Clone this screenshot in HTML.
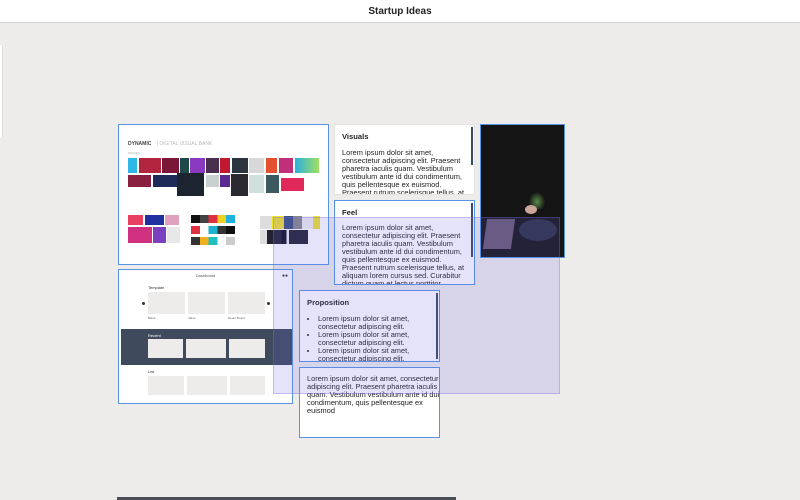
<!DOCTYPE html>
<html><head><style>
*{margin:0;padding:0;box-sizing:border-box}
body{width:800px;height:500px;overflow:hidden;background:#eeecea;font-family:"Liberation Sans",sans-serif;position:relative}
.a{position:absolute}
.hdr{left:0;top:0;width:800px;height:23px;background:#fff;border-bottom:1px solid #d6d4d2;text-align:center;font-size:10px;font-weight:bold;line-height:24px;color:#222}
.card{position:absolute;background:#fff;border:1px solid #5595e4;overflow:hidden}
.txt{font-size:7.4px;line-height:8px;color:#222}
.ttl{font-size:7.6px;font-weight:bold;color:#222}
.sb{position:absolute;right:1px;top:2px;width:2px;background:#3a4a6a}
.r{position:absolute}
</style></head><body>
<div class="a hdr">Startup Ideas</div>
<div class="a" style="left:0;top:45px;width:3px;height:93px;background:#fff;border-right:1px solid #ddd"></div>

<div class="card" style="left:118px;top:124px;width:211px;height:141px">
<div class="r" style="left:9px;top:16px;font-size:5px;font-weight:bold;color:#444">DYNAMIC <span style="color:#bbb;font-weight:normal;margin-left:4px">| DIGITAL VISUAL BANK</span></div>
<div class="r" style="left:9px;top:26px;font-size:3px;color:#aaa">IMAGES</div>
</div>
<div class="r" style="left:128px;top:158px;width:9px;height:15px;background:#2fb7e8"></div>
<div class="r" style="left:139px;top:158px;width:22px;height:15px;background:#b3243e"></div>
<div class="r" style="left:162px;top:158px;width:17px;height:15px;background:#7a1638"></div>
<div class="r" style="left:180px;top:158px;width:9px;height:15px;background:#1d4a48"></div>
<div class="r" style="left:190px;top:158px;width:15px;height:15px;background:#8a3ac0"></div>
<div class="r" style="left:206px;top:158px;width:13px;height:15px;background:#4a3050"></div>
<div class="r" style="left:220px;top:158px;width:10px;height:15px;background:#c0182e"></div>
<div class="r" style="left:232px;top:158px;width:16px;height:15px;background:#2c3440"></div>
<div class="r" style="left:249px;top:158px;width:15px;height:15px;background:#d8d8d8"></div>
<div class="r" style="left:266px;top:158px;width:11px;height:15px;background:#e5502e"></div>
<div class="r" style="left:279px;top:158px;width:14px;height:15px;background:#c0307a"></div>
<div class="r" style="left:295px;top:158px;width:24px;height:15px;background:linear-gradient(90deg,#2bb0e0,#a0e060)"></div>
<div class="r" style="left:128px;top:175px;width:23px;height:12px;background:#8a2040"></div>
<div class="r" style="left:153px;top:175px;width:24px;height:12px;background:#1e2a58"></div>
<div class="r" style="left:177px;top:173px;width:27px;height:23px;background:#1c2430"></div>
<div class="r" style="left:206px;top:175px;width:13px;height:12px;background:#c8d0d0"></div>
<div class="r" style="left:220px;top:175px;width:10px;height:12px;background:#5a2a90"></div>
<div class="r" style="left:231px;top:174px;width:17px;height:22px;background:#2a2a30"></div>
<div class="r" style="left:249px;top:175px;width:15px;height:18px;background:#d0e0dc"></div>
<div class="r" style="left:266px;top:175px;width:13px;height:18px;background:#3a5a60"></div>
<div class="r" style="left:281px;top:178px;width:23px;height:13px;background:#e0285a"></div>
<div class="r" style="left:128px;top:215px;width:15px;height:10px;background:#e84060"></div>
<div class="r" style="left:145px;top:215px;width:19px;height:10px;background:#2030a0"></div>
<div class="r" style="left:165px;top:215px;width:14px;height:10px;background:#e0a0c0"></div>
<div class="r" style="left:128px;top:227px;width:24px;height:16px;background:#d03080"></div>
<div class="r" style="left:153px;top:227px;width:13px;height:16px;background:#7a40c0"></div>
<div class="r" style="left:167px;top:227px;width:13px;height:16px;background:#e8e8e8"></div>
<div class="r" style="left:191px;top:215px;width:44px;height:8px;background:linear-gradient(90deg,#111 0 20%,#444 20% 40%,#e03040 40% 60%,#f0d020 60% 80%,#20b0e0 80%)"></div>
<div class="r" style="left:191px;top:226px;width:44px;height:8px;background:linear-gradient(90deg,#e03040 0 20%,#fff 20% 40%,#20b0d0 40% 60%,#333 60% 80%,#111 80%)"></div>
<div class="r" style="left:191px;top:237px;width:44px;height:8px;background:linear-gradient(90deg,#333 0 20%,#f0b020 20% 40%,#20c0c0 40% 60%,#fff 60% 80%,#ccc 80%)"></div>
<div class="r" style="left:260px;top:216px;width:60px;height:13px;background:linear-gradient(90deg,#ddd 0 20%,#f0e030 20% 40%,#3a5080 40% 55%,#888 55% 70%,#eee 70% 88%,#f0e030 88%)"></div>
<div class="r" style="left:260px;top:230px;width:48px;height:14px;background:linear-gradient(90deg,#ddd 0 15%,#223 15% 45%,#112 45% 55%,#eee 55% 60%,#223 60%)"></div>

<div class="card" style="left:118px;top:269px;width:175px;height:135px">
<div class="r" style="left:0;width:100%;top:3px;text-align:center;font-size:4px;color:#555">Dashboard</div>
<div class="r" style="right:4px;top:3px;font-size:5px;color:#333">●●</div>
<div class="r" style="left:29px;top:15px;font-size:4px;color:#333">Template</div>
<div class="r" style="left:23px;top:32px;width:3px;height:3px;border-radius:50%;background:#333"></div>
<div class="r" style="left:148px;top:32px;width:3px;height:3px;border-radius:50%;background:#333"></div>
<div class="r" style="left:29px;top:22px;width:37px;height:22px;background:#eeeceb"></div>
<div class="r" style="left:69px;top:22px;width:37px;height:22px;background:#eeeceb"></div>
<div class="r" style="left:109px;top:22px;width:37px;height:22px;background:#eeeceb"></div>
<div class="r" style="left:29px;top:46px;font-size:3px;color:#666">Blank</div>
<div class="r" style="left:69px;top:46px;font-size:3px;color:#666">Value</div>
<div class="r" style="left:109px;top:46px;font-size:3px;color:#666">React Board</div>
<div class="r" style="left:2px;top:59px;width:171px;height:36px;background:#3f4a5c"></div>
<div class="r" style="left:29px;top:63px;font-size:4px;color:#fff">Recent</div>
<div class="r" style="left:29px;top:69px;width:35px;height:19px;background:#eeeceb"></div>
<div class="r" style="left:67px;top:69px;width:40px;height:19px;background:#eeeceb"></div>
<div class="r" style="left:110px;top:69px;width:36px;height:19px;background:#eeeceb"></div>
<div class="r" style="left:29px;top:99px;font-size:4px;color:#333">List</div>
<div class="r" style="left:29px;top:106px;width:36px;height:19px;background:#eeeceb"></div>
<div class="r" style="left:68px;top:106px;width:40px;height:19px;background:#eeeceb"></div>
<div class="r" style="left:111px;top:106px;width:35px;height:19px;background:#eeeceb"></div>
</div>

<div class="card" style="left:334px;top:124px;width:141px;height:71px;border-color:#e4e4e4">
<div class="sb" style="height:38px"></div>
<div class="r ttl" style="left:7px;top:7px">Visuals</div>
<div class="r txt" style="left:7px;top:24px;width:130px">Lorem ipsum dolor sit amet, consectetur adipiscing elit. Praesent pharetra iaculis quam. Vestibulum vestibulum ante id dui condimentum, quis pellentesque ex euismod. Praesent rutrum scelerisque tellus, at</div>
</div>
<div class="card" style="left:334px;top:200px;width:141px;height:85px">
<div class="sb" style="height:54px"></div>
<div class="r ttl" style="left:7px;top:7px">Feel</div>
<div class="r txt" style="left:7px;top:23px;width:130px">Lorem ipsum dolor sit amet, consectetur adipiscing elit. Praesent pharetra iaculis quam. Vestibulum vestibulum ante id dui condimentum, quis pellentesque ex euismod. Praesent rutrum scelerisque tellus, at aliquam lorem cursus sed. Curabitur dictum quam et lectus porttitor</div>
</div>
<div class="card" style="left:480px;top:124px;width:85px;height:134px;background:#141414">
<div class="r" style="left:47px;top:66px;width:18px;height:18px;background:radial-gradient(ellipse at 50% 60%,#5a8a48,transparent 65%)"></div>
<div class="r" style="left:44px;top:80px;width:12px;height:9px;border-radius:50%;background:#c9a89a"></div>
<div class="r" style="left:4px;top:94px;width:28px;height:30px;background:#6a5a70;transform:skewX(-8deg)"></div>
<div class="r" style="left:38px;top:94px;width:38px;height:22px;border-radius:50%;background:#2a3040"></div>
</div>
<div class="card" style="left:299px;top:290px;width:141px;height:72px">
<div class="sb" style="height:66px;width:2px"></div>
<div class="r ttl" style="left:7px;top:7px">Proposition</div>
<ul class="r txt" style="left:18px;top:24px;width:118px">
<li>Lorem ipsum dolor sit amet, consectetur adipiscing elit.</li>
<li>Lorem ipsum dolor sit amet, consectetur adipiscing elit.</li>
<li>Lorem ipsum dolor sit amet, consectetur adipiscing elit.</li>
</ul>
</div>
<div class="card" style="left:299px;top:367px;width:141px;height:71px">
<div class="r txt" style="left:7px;top:7px;white-space:nowrap">Lorem ipsum dolor sit amet, consectetur<br>adipiscing elit. Praesent pharetra iaculis<br>quam. Vestibulum vestibulum ante id dui<br>condimentum, quis pellentesque ex<br>euismod</div>
</div>

<div class="a" style="left:273px;top:217px;width:287px;height:177px;background:rgba(110,100,230,0.18);border:1px solid rgba(120,110,220,0.35)"></div>

<div class="a" style="left:117px;top:497px;width:339px;height:3px;background:#4a4f57"></div>
</body></html>
